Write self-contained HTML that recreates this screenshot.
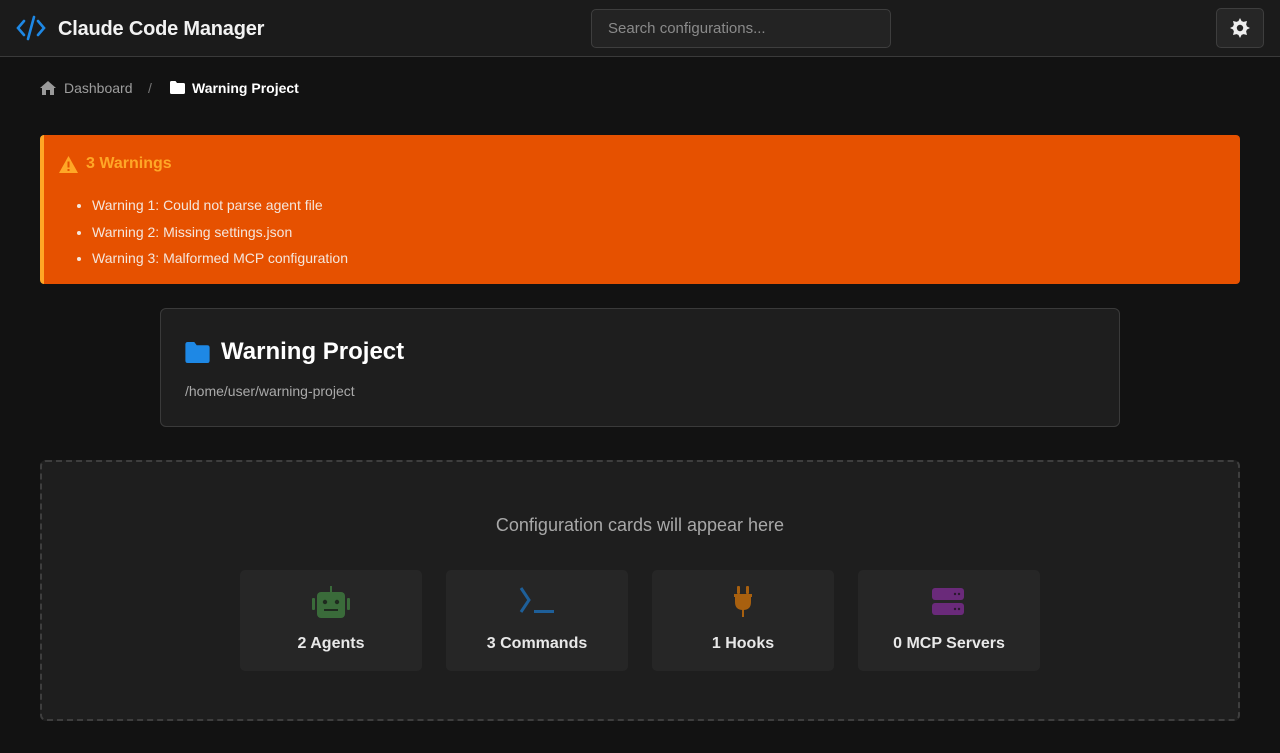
<!DOCTYPE html>
<html><head><meta charset="utf-8"><style>
*{box-sizing:border-box;margin:0;padding:0}
body{width:1280px;height:753px;background:#121212;font-family:"Liberation Sans",sans-serif;color:#e8e8e8;overflow:hidden;position:relative}
.hdr{position:absolute;left:0;top:0;width:1280px;height:57px;background:#1b1b1b;border-bottom:1px solid #3a3a3a}
.logo{position:absolute;left:15px;top:15px}
.title{position:absolute;left:58px;top:18px;font-size:20px;font-weight:bold;color:#f2f2f2;letter-spacing:-0.2px}
.search{position:absolute;left:591px;top:9px;width:300px;height:39px;border:1px solid #3e3e3e;border-radius:5px;background:#232323;color:#8a8a8a;font-size:15px;padding:10px 16px}
.btn{position:absolute;left:1216px;top:8px;width:48px;height:40px;border:1px solid #3e3e3e;border-radius:5px;background:#262626}
.bc{position:absolute;top:80px;font-size:14px}
.warn{position:absolute;left:40px;top:135px;width:1200px;height:149px;background:#e65100;border-left:4px solid #ffa726;border-radius:4px}
.warn h3{position:absolute;left:42px;top:20px;font-size:16px;color:#ffa726}
.warn ul{position:absolute;left:48px;top:57px;font-size:14px;color:#f5e6dc;line-height:26.5px}
.proj{position:absolute;left:160px;top:308px;width:960px;height:119px;background:#1e1e1e;border:1px solid #3a3a3a;border-radius:6px}
.dash{position:absolute;left:40px;top:460px;width:1200px;height:261px;background:#1e1e1e;border:2px dashed #3e3e3e;border-radius:6px}
.c{position:absolute;top:570px;width:182px;height:101px;background:#262626;border-radius:5px;text-align:center}
.c svg{position:absolute;left:71px;top:14px}
.c span{position:absolute;left:0;right:0;top:65px;font-size:16px;font-weight:bold;color:#e8e8e8}
</style></head><body>
<div class="hdr">
<svg class="logo" width="32" height="26" viewBox="0 0 32 26"><path d="M9 6 L3 13 L9 20 M23 6 L29 13 L23 20 M19 2 L13 24" stroke="#1e88e5" stroke-width="2.6" fill="none" stroke-linecap="round"/></svg>
<div class="title">Claude Code Manager</div>
<div class="search">Search configurations...</div>
<div class="btn"><svg width="48" height="40" viewBox="0 0 48 40" style="position:absolute;left:-1px;top:-1px"><g fill="#eee"><circle cx="24" cy="20" r="7"/><path d="M24 10l2 4h-4zM24 30l2-4h-4zM14 20l4 2v-4zM34 20l-4 2v-4zM17 13l4 1-3 3zM31 13l-1 4-3-3zM17 27l1-4 3 3zM31 27l-4-1 3-3z"/></g><circle cx="24" cy="20" r="3.2" fill="#262626"/></svg></div>
</div>
<svg style="position:absolute;left:39px;top:80px" width="18" height="16" viewBox="0 0 18 16"><path d="M9 1 L1 8 H3 V15 H7 V10 H11 V15 H15 V8 H17 Z" fill="#9a9a9a"/></svg>
<div class="bc" style="left:64px;color:#9e9e9e">Dashboard</div>
<div class="bc" style="left:148px;color:#777">/</div>
<svg style="position:absolute;left:170px;top:81px" width="15" height="13" viewBox="0 0 15 13"><path d="M0 1.5Q0 0 1.5 0H5.5L7 2H13.5Q15 2 15 3.5V11.5Q15 13 13.5 13H1.5Q0 13 0 11.5Z" fill="#fff"/></svg>
<div class="bc" style="left:192px;color:#fff;font-weight:bold">Warning Project</div>
<div class="warn">
<svg style="position:absolute;left:15px;top:21px" width="19" height="17" viewBox="0 0 19 17"><path d="M9.5 0L19 17H0Z" fill="#ffa726"/><rect x="8.5" y="5.5" width="2" height="6" fill="#e65100"/><rect x="8.5" y="13" width="2" height="2" fill="#e65100"/></svg>
<h3>3 Warnings</h3>
<ul><li>Warning 1: Could not parse agent file</li><li>Warning 2: Missing settings.json</li><li>Warning 3: Malformed MCP configuration</li></ul>
</div>
<div class="proj">
<svg style="position:absolute;left:24px;top:33px" width="25" height="21" viewBox="0 0 15 13"><path d="M0 1.5Q0 0 1.5 0H5.5L7 2H13.5Q15 2 15 3.5V11.5Q15 13 13.5 13H1.5Q0 13 0 11.5Z" fill="#1e88e5"/></svg>
<div style="position:absolute;left:60px;top:29px;font-size:24px;font-weight:bold;color:#fff">Warning Project</div>
<div style="position:absolute;left:24px;top:74px;font-size:14px;color:#aaa">/home/user/warning-project</div>
</div>
<div class="dash"><div style="position:absolute;left:0;right:0;top:53px;text-align:center;font-size:18px;color:#a8a8a8">Configuration cards will appear here</div></div>
<div class="c" style="left:240px"><svg width="40" height="36" viewBox="0 0 40 36"><g fill="#3a6b3a"><rect x="19" y="2" width="2" height="6"/><rect x="6" y="8" width="28" height="26" rx="4"/><rect x="1" y="14" width="3" height="12" rx="1"/><rect x="36" y="14" width="3" height="12" rx="1"/></g><g fill="#1f2a1f"><circle cx="14" cy="18" r="2.2"/><circle cx="26" cy="18" r="2.2"/><rect x="13" y="25" width="14" height="2"/></g></svg><span>2 Agents</span></div>
<div class="c" style="left:446px"><svg width="40" height="36" viewBox="0 0 40 36"><path d="M4 4 L12 16 L4 28" stroke="#1e5f99" stroke-width="3" fill="none"/><rect x="17" y="26" width="20" height="3" fill="#1e5f99"/></svg><span>3 Commands</span></div>
<div class="c" style="left:652px"><svg width="40" height="36" viewBox="0 0 40 36"><g fill="#a8600f"><rect x="14" y="2" width="3" height="8" rx="1"/><rect x="23" y="2" width="3" height="8" rx="1"/><rect x="11" y="10" width="18" height="3"/><path d="M12 13H28V18Q28 26 20 26Q12 26 12 18Z"/><rect x="19" y="25" width="2" height="8"/></g></svg><span>1 Hooks</span></div>
<div class="c" style="left:858px"><svg width="40" height="36" viewBox="0 0 40 36"><g fill="#6a2a7a"><rect x="3" y="4" width="32" height="12" rx="3"/><rect x="3" y="19" width="32" height="12" rx="3"/></g><g fill="#2a1a2e"><circle cx="26" cy="10" r="1.2"/><circle cx="30" cy="10" r="1.2"/><circle cx="26" cy="25" r="1.2"/><circle cx="30" cy="25" r="1.2"/></g></svg><span>0 MCP Servers</span></div>
</body></html>
